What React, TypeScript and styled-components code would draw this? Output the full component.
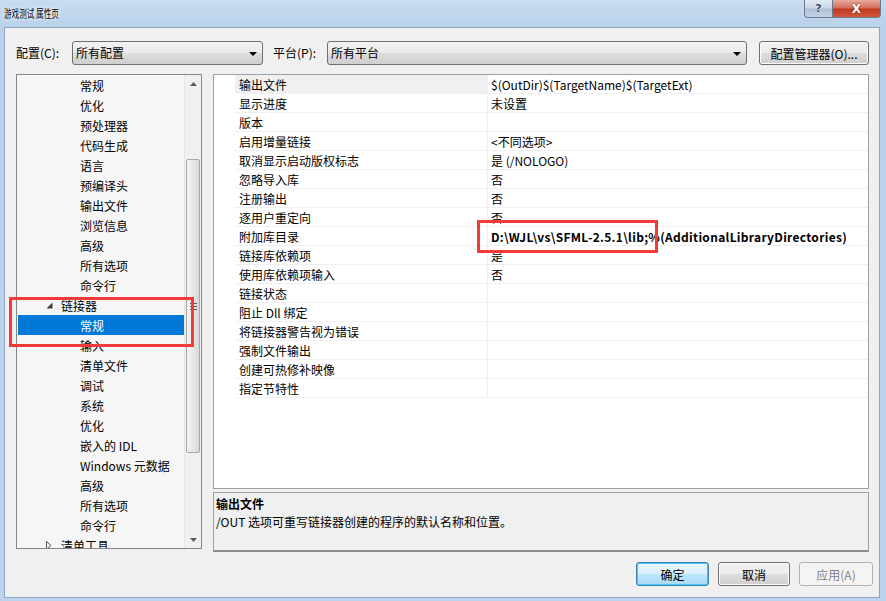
import React from "react";
import styled, { createGlobalStyle } from "styled-components";

const GlobalStyle = createGlobalStyle`
  html, body { margin: 0; padding: 0; }
  body {
    width: 886px; height: 601px; overflow: hidden;
    font-family: "Noto Sans CJK SC", "Noto Sans", sans-serif;
    font-size: 12px; color: #000; background: #b9d1ea;
  }
  * { box-sizing: border-box; }
`;

const Window = styled.div`
  position: relative;
  width: 886px;
  height: 601px;
  display: flex;
  flex-direction: column;
  background: linear-gradient(180deg, #c8dcf1 0px, #b9d1ea 27px, #bcd3ec 601px);
`;

const TitleBar = styled.div`
  height: 27px;
  display: flex;
  align-items: flex-start;
  justify-content: space-between;
  padding: 0 5px 0 4px;
`;

const TitleText = styled.span`
  margin-top: 6px;
  font-size: 11.5px;
  line-height: 14px;
  white-space: nowrap;
  color: #000;
  display: inline-block;
  transform: scaleX(0.66);
  transform-origin: left center;
  text-shadow: 0 0 6px #fff, 0 0 3px #fff;
`;

const CaptionGroup = styled.div`
  display: flex;
  height: 18px;
`;

const CaptionButton = styled.div<{ $close?: boolean }>`
  width: ${(p) => (p.$close ? 48 : 29)}px;
  height: 18px;
  display: flex;
  align-items: center;
  justify-content: center;
  border: 1px solid #6b7b8f;
  border-top: none;
  border-left: ${(p) => (p.$close ? "none" : "1px solid #6b7b8f")};
  border-radius: ${(p) => (p.$close ? "0 0 4px 0" : "0 0 0 4px")};
  background: ${(p) =>
    p.$close
      ? "linear-gradient(180deg, #e9a99c 0%, #d6705e 45%, #c1391f 55%, #cf5a38 100%)"
      : "linear-gradient(180deg, #e3ebf4 0%, #cbd8e8 45%, #aebfd6 55%, #c4d3e6 100%)"};
  color: ${(p) => (p.$close ? "#fff" : "#3a4a5e")};
  font-family: "DejaVu Sans", sans-serif;
  font-weight: bold;
  font-size: ${(p) => (p.$close ? 12 : 11)}px;
  text-shadow: ${(p) => (p.$close ? "0 0 2px #7a1a0a" : "0 0 2px #fff")};
`;

const Client = styled.div`
  flex: 1;
  margin: 0 6px 3px 4px;
  border: 1px solid #8fa4bd;
  background: #f0f0f0;
  display: flex;
  flex-direction: column;
`;

const TopRow = styled.div`
  margin-top: 13px;
  padding-left: 11px;
  height: 24px;
  display: flex;
  align-items: center;
`;

const Label = styled.span<{ $w: number; $pad?: number }>`
  width: ${(p) => p.$w}px;
  padding-left: ${(p) => p.$pad ?? 0}px;
  white-space: nowrap;
  line-height: 24px;
`;

const Combo = styled.div<{ $w: number }>`
  width: ${(p) => p.$w}px;
  height: 24px;
  border: 1px solid #707070;
  border-radius: 3px;
  background: linear-gradient(180deg, #f2f2f2 0%, #ebebeb 48%, #dddddd 52%, #cfcfcf 100%);
  display: flex;
  align-items: center;
  justify-content: space-between;
  padding: 0 5px 0 3px;
  line-height: 22px;
`;

const Arrow = styled.span`
  width: 0;
  height: 0;
  border-left: 4px solid transparent;
  border-right: 4px solid transparent;
  border-top: 4px solid #000;
  margin-top: 2px;
`;

const Spacer = styled.span<{ $w: number }>`
  width: ${(p) => p.$w}px;
`;

const PushButton = styled.div<{ $w: number; $variant?: "default" | "disabled" }>`
  width: ${(p) => p.$w}px;
  height: 24px;
  border: 1px solid
    ${(p) => (p.$variant === "default" ? "#3c7fb1" : p.$variant === "disabled" ? "#adb2b5" : "#707070")};
  border-radius: 3px;
  display: flex;
  align-items: center;
  justify-content: center;
  white-space: nowrap;
  color: ${(p) => (p.$variant === "disabled" ? "#838383" : "#000")};
  background: ${(p) =>
    p.$variant === "default"
      ? "linear-gradient(180deg, #eaf6fd 0%, #d9f0fc 48%, #bee6fd 52%, #a7d9f5 100%)"
      : p.$variant === "disabled"
      ? "#f4f4f4"
      : "linear-gradient(180deg, #f2f2f2 0%, #ebebeb 48%, #dddddd 52%, #cfcfcf 100%)"};
  box-shadow: ${(p) =>
    p.$variant === "default" ? "inset 0 0 0 1px #48c6f3" : p.$variant === "disabled" ? "none" : "inset 0 0 0 1px #fcfcfc"};
`;

const Main = styled.div`
  margin-top: 9px;
  padding-left: 11px;
  display: flex;
  align-items: flex-start;
  gap: 11px;
`;

const Tree = styled.div`
  width: 186px;
  height: 475px;
  border: 1px solid #828790;
  background: #f6f6f6;
  display: flex;
  overflow: hidden;
`;

const TreeList = styled.div`
  flex: 1;
  padding-left: 1px;
  overflow: hidden;
`;

const TreeItem = styled.div<{ $level: number; $selected?: boolean }>`
  height: 20px;
  display: flex;
  align-items: center;
  padding-left: ${(p) => (p.$level === 0 ? 26 : 62)}px;
  background: ${(p) => (p.$selected ? "#0078d7" : "transparent")};
  color: ${(p) => (p.$selected ? "#fff" : "#000")};
  white-space: nowrap;
`;

const Expander = styled.span`
  width: 7px;
  height: 20px;
  display: inline-flex;
  align-items: center;
  justify-content: flex-start;
  margin-left: 2px;
  margin-right: 8px;
`;

const ScrollBar = styled.div`
  width: 17px;
  height: 100%;
  background: #f0f0f0;
  border-left: 1px solid #e6e6e6;
  display: flex;
  flex-direction: column;
  align-items: center;
`;

const ScrollArrow = styled.div`
  height: 17px;
  width: 100%;
  display: flex;
  align-items: center;
  justify-content: center;
`;

const ScrollTrack = styled.div`
  flex: 1;
  width: 100%;
  position: relative;
`;

const Thumb = styled.div`
  position: absolute;
  left: 1px;
  right: 1px;
  top: 67px;
  height: 294px;
  border: 1px solid #a8a8a8;
  border-radius: 2px;
  background: linear-gradient(90deg, #f4f4f4 0%, #e6e6e6 50%, #d8d8d8 100%);
  display: flex;
  align-items: center;
  justify-content: center;
`;

const Grip = styled.div`
  width: 7px;
  height: 7px;
  background: repeating-linear-gradient(180deg, #555 0px, #555 1px, transparent 1px, transparent 3px);
`;

const RightPane = styled.div`
  width: 656px;
  display: flex;
  flex-direction: column;
  gap: 3px;
`;

const Grid = styled.div`
  height: 415px;
  border: 1px solid #a0a0a0;
  background: #fff;
  display: flex;
  flex-direction: column;
`;

const PropRow = styled.div`
  height: 19px;
  display: grid;
  grid-template-columns: 21px 253px 1fr;
`;

const Gutter = styled.div``;

const NameCell = styled.div<{ $selected?: boolean }>`
  border-bottom: 1px solid #f0f0f0;
  border-right: 1px solid #f0f0f0;
  background: ${(p) => (p.$selected ? "#f0f0f0" : "#fff")};
  padding-left: 4px;
  line-height: 19px;
  white-space: nowrap;
  overflow: hidden;
`;

const ValueCell = styled.div<{ $bold?: boolean }>`
  border-bottom: 1px solid #f0f0f0;
  padding-left: 3px;
  line-height: 19px;
  white-space: nowrap;
  overflow: hidden;
  font-weight: ${(p) => (p.$bold ? 700 : 400)};
  letter-spacing: ${(p) => (p.$bold ? "0.3px" : "0")};
`;

const Description = styled.div`
  height: 60px;
  border: 1px solid #a0a0a0;
  border-bottom: 2px solid #8c8c8c;
  background: #f0f0f0;
  padding: 2px 2px 0;
  display: flex;
  flex-direction: column;
`;

const DescTitle = styled.div`
  font-weight: 700;
  line-height: 18px;
`;

const DescText = styled.div`
  line-height: 18px;
`;

const ButtonRow = styled.div`
  margin-top: 10px;
  padding-right: 6px;
  display: flex;
  justify-content: flex-end;
  gap: 9px;
`;

const Annotation = styled.div<{ $x: number; $y: number; $w: number; $h: number }>`
  position: absolute;
  left: ${(p) => p.$x}px;
  top: ${(p) => p.$y}px;
  width: ${(p) => p.$w}px;
  height: ${(p) => p.$h}px;
  border: 3px solid #f23a3a;
  pointer-events: none;
`;

type Node = { label: string; level: number; expander?: "open" | "closed"; selected?: boolean };

const treeItems: Node[] = [
  { label: "常规", level: 1 },
  { label: "优化", level: 1 },
  { label: "预处理器", level: 1 },
  { label: "代码生成", level: 1 },
  { label: "语言", level: 1 },
  { label: "预编译头", level: 1 },
  { label: "输出文件", level: 1 },
  { label: "浏览信息", level: 1 },
  { label: "高级", level: 1 },
  { label: "所有选项", level: 1 },
  { label: "命令行", level: 1 },
  { label: "链接器", level: 0, expander: "open" },
  { label: "常规", level: 1, selected: true },
  { label: "输入", level: 1 },
  { label: "清单文件", level: 1 },
  { label: "调试", level: 1 },
  { label: "系统", level: 1 },
  { label: "优化", level: 1 },
  { label: "嵌入的 IDL", level: 1 },
  { label: "Windows 元数据", level: 1 },
  { label: "高级", level: 1 },
  { label: "所有选项", level: 1 },
  { label: "命令行", level: 1 },
  { label: "清单工具", level: 0, expander: "closed" },
];

type Prop = { name: string; value: string; bold?: boolean };

const props: Prop[] = [
  { name: "输出文件", value: "$(OutDir)$(TargetName)$(TargetExt)" },
  { name: "显示进度", value: "未设置" },
  { name: "版本", value: "" },
  { name: "启用增量链接", value: "<不同选项>" },
  { name: "取消显示启动版权标志", value: "是 (/NOLOGO)" },
  { name: "忽略导入库", value: "否" },
  { name: "注册输出", value: "否" },
  { name: "逐用户重定向", value: "否" },
  { name: "附加库目录", value: "D:\\WJL\\vs\\SFML-2.5.1\\lib;%(AdditionalLibraryDirectories)", bold: true },
  { name: "链接库依赖项", value: "是" },
  { name: "使用库依赖项输入", value: "否" },
  { name: "链接状态", value: "" },
  { name: "阻止 Dll 绑定", value: "" },
  { name: "将链接器警告视为错误", value: "" },
  { name: "强制文件输出", value: "" },
  { name: "创建可热修补映像", value: "" },
  { name: "指定节特性", value: "" },
];

const OpenGlyph = () => (
  <svg width="7" height="7" viewBox="0 0 7 7">
    <polygon points="6.5,0.5 6.5,6.5 0.5,6.5" fill="#3c3c3c" />
  </svg>
);

const ClosedGlyph = () => (
  <svg width="6" height="9" viewBox="0 0 6 9">
    <polygon points="0.5,0.5 5,4.5 0.5,8.5" fill="none" stroke="#555" strokeWidth="1" />
  </svg>
);

const TriUp = () => (
  <svg width="7" height="4" viewBox="0 0 7 4">
    <polygon points="0,4 7,4 3.5,0" fill="#5a5a5a" />
  </svg>
);

const TriDown = () => (
  <svg width="7" height="4" viewBox="0 0 7 4">
    <polygon points="0,0 7,0 3.5,4" fill="#5a5a5a" />
  </svg>
);

export default function App() {
  return (
    <>
      <GlobalStyle />
      <Window>
        <TitleBar>
          <TitleText>游戏测试 属性页</TitleText>
          <CaptionGroup>
            <CaptionButton>?</CaptionButton>
            <CaptionButton $close>X</CaptionButton>
          </CaptionGroup>
        </TitleBar>
        <Client>
          <TopRow>
            <Label $w={56}>配置(C):</Label>
            <Combo $w={191}>
              <span>所有配置</span>
              <Arrow />
            </Combo>
            <Label $w={64} $pad={10}>平台(P):</Label>
            <Combo $w={420}>
              <span>所有平台</span>
              <Arrow />
            </Combo>
            <Spacer $w={12} />
            <PushButton $w={110}>配置管理器(O)...</PushButton>
          </TopRow>
          <Main>
            <Tree>
              <TreeList>
                {treeItems.map((n, i) => (
                  <TreeItem key={i} $level={n.level} $selected={n.selected}>
                    {n.expander && (
                      <Expander>{n.expander === "open" ? <OpenGlyph /> : <ClosedGlyph />}</Expander>
                    )}
                    {n.label}
                  </TreeItem>
                ))}
              </TreeList>
              <ScrollBar>
                <ScrollArrow>
                  <TriUp />
                </ScrollArrow>
                <ScrollTrack>
                  <Thumb>
                    <Grip />
                  </Thumb>
                </ScrollTrack>
                <ScrollArrow>
                  <TriDown />
                </ScrollArrow>
              </ScrollBar>
            </Tree>
            <RightPane>
              <Grid>
                {props.map((p, i) => (
                  <PropRow key={i}>
                    <Gutter />
                    <NameCell $selected={i === 0}>{p.name}</NameCell>
                    <ValueCell $bold={p.bold}>{p.value}</ValueCell>
                  </PropRow>
                ))}
              </Grid>
              <Description>
                <DescTitle>输出文件</DescTitle>
                <DescText>/OUT 选项可重写链接器创建的程序的默认名称和位置。</DescText>
              </Description>
            </RightPane>
          </Main>
          <ButtonRow>
            <PushButton $w={73} $variant="default">确定</PushButton>
            <PushButton $w={72}>取消</PushButton>
            <PushButton $w={74} $variant="disabled">应用(A)</PushButton>
          </ButtonRow>
        </Client>
        <Annotation $x={9} $y={297} $w={185} $h={50} />
        <Annotation $x={477} $y={220} $w={181} $h={33} />
      </Window>
    </>
  );
}
